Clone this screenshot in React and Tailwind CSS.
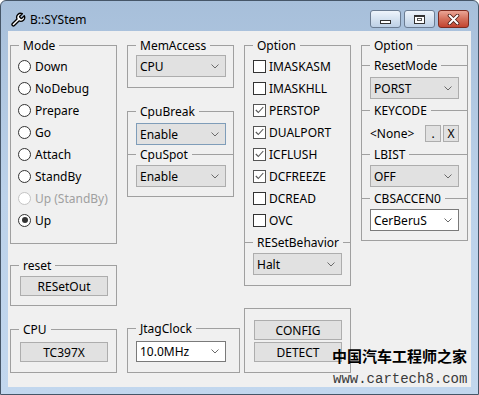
import React from 'react';

const Chevron = () => (
  <svg width="8" height="5" viewBox="0 0 8 5">
    <path d="M0.5 0.5 L4 4 L7.5 0.5" fill="none" stroke="#6a6a6a" strokeWidth="1" />
  </svg>
);

const Group = ({ label, className = '', children }) => (
  <fieldset className={`border border-[#a0a0a0] ${className}`}>
    {label && <legend className="ml-[8px] px-[4px] leading-[15px]">{label}</legend>}
    {children}
  </fieldset>
);

const Divider = ({ label, className = '' }) => (
  <div className={`flex items-center h-[15px] ${className}`}>
    <div className="w-[8px] h-px bg-[#a0a0a0]" />
    <span className="px-[4px] leading-[15px]">{label}</span>
    <div className="flex-1 h-px bg-[#a0a0a0]" />
  </div>
);

const Select = ({ value, white, className = '' }) => (
  <div
    className={`flex items-center justify-between h-[22px] border pl-[3px] pr-[6px] ${
      white ? 'bg-white border-[#7a7a7a]' : 'bg-[#e1e1e1] border-[#adadad]'
    } ${className}`}
  >
    <span className="leading-[15px]">{value}</span>
    <Chevron />
  </div>
);

const Button = ({ children, className = '' }) => (
  <div className={`flex items-center justify-center h-[20px] border border-[#adadad] bg-[#e1e1e1] leading-[15px] ${className}`}>
    {children}
  </div>
);

const Radio = ({ label, checked, disabled }) => (
  <div className="flex items-center h-[22px] pl-[7px] gap-[4px]">
    <div
      className={`w-[13px] h-[13px] rounded-full border bg-white flex items-center justify-center ${
        disabled ? 'border-[#c4c4c4]' : 'border-[#333333]'
      }`}
    >
      {checked && <div className="w-[6px] h-[6px] rounded-full bg-[#333333]" />}
    </div>
    <span className={`leading-[15px] ${disabled ? 'text-[#a0a0a0]' : ''}`}>{label}</span>
  </div>
);

const Check = ({ label, checked }) => (
  <div className="flex items-center h-[22px] pl-[8px] gap-[3px]">
    <div
      className={`w-[13px] h-[13px] border bg-white flex items-center justify-center ${
        checked ? 'border-[#555555]' : 'border-[#333333]'
      }`}
    >
      {checked && (
        <svg width="9" height="8" viewBox="0 0 9 8">
          <path d="M0.8 4 L3.3 6.5 L8.3 1" fill="none" stroke="#555555" strokeWidth="1.1" />
        </svg>
      )}
    </div>
    <span className="leading-[15px]">{label}</span>
  </div>
);

const Wrench = () => (
  <svg width="16" height="16" viewBox="0 0 24 24">
    <path
      d="M14.7 6.3a1 1 0 0 0 0 1.4l1.6 1.6a1 1 0 0 0 1.4 0l3.77-3.77a6 6 0 0 1-7.94 7.94l-6.91 6.91a2.12 2.12 0 0 1-3-3l6.91-6.91a6 6 0 0 1 7.94-7.94l-3.76 3.76z"
      fill="white"
      stroke="black"
      strokeWidth="2"
      strokeLinejoin="round"
    />
  </svg>
);

export default function App() {
  return (
    <div className="relative w-[479px] h-[395px] bg-white font-['Noto_Sans',sans-serif] text-[12px] text-black">
      <div className="w-full h-full flex flex-col rounded-t-[6px] border border-[#465668] bg-gradient-to-b from-[#a7bfda] via-[#bcd2ea] to-[#c2d7ee]">
        {/* title bar */}
        <div className="h-[30px] flex items-start pl-[9px] pr-[9px]">
          <div className="mt-[11px]">
            <Wrench />
          </div>
          <span className="ml-[4px] mt-[11px] leading-[15px]">B::SYStem</span>
          <div className="ml-auto mt-[9px] flex gap-[3px]">
            <div className="w-[31px] h-[18px] rounded-[3px] border border-[#6b7c92] bg-gradient-to-b from-[#eef4fb] via-[#d5e2f0] to-[#bdd0e6] flex items-end justify-center pb-[3px]">
              <div className="w-[11px] h-[4px] bg-white border border-[#333333]" />
            </div>
            <div className="w-[31px] h-[18px] rounded-[3px] border border-[#6b7c92] bg-gradient-to-b from-[#eef4fb] via-[#d5e2f0] to-[#bdd0e6] flex items-center justify-center">
              <div className="w-[11px] h-[9px] bg-white border border-[#333333] border-t-2 flex items-center justify-center">
                <div className="w-[5px] h-[3px] border border-[#555555]" />
              </div>
            </div>
            <div className="w-[31px] h-[18px] rounded-[3px] border border-[#7c2b20] bg-gradient-to-b from-[#eaa596] via-[#d4705c] to-[#c2432f] flex items-center justify-center">
              <svg width="13" height="11" viewBox="0 0 13 11">
                <path d="M2.5 1.5 L10.5 9.5 M10.5 1.5 L2.5 9.5" stroke="#4a1a12" strokeWidth="3.6" strokeLinecap="round" />
                <path d="M2.5 1.5 L10.5 9.5 M10.5 1.5 L2.5 9.5" stroke="white" strokeWidth="2" strokeLinecap="round" />
              </svg>
            </div>
          </div>
        </div>

        {/* client area */}
        <div className="flex-1 mx-[7px] mb-[7px] bg-[#f0f0f0] flex pt-[7px] pb-[14px] pl-[2px] gap-[10px]">
          {/* column 1 */}
          <div className="w-[107px] flex flex-col">
            <Group label="Mode" className="pb-[12px]">
              <div className="mt-[2px]">
                <Radio label="Down" />
                <Radio label="NoDebug" />
                <Radio label="Prepare" />
                <Radio label="Go" />
                <Radio label="Attach" />
                <Radio label="StandBy" />
                <Radio label="Up (StandBy)" disabled />
                <Radio label="Up" checked />
              </div>
            </Group>
            <Group label="reset" className="mt-[14px] pb-[9px]">
              <Button className="mt-[3px] ml-[9px] w-[88px]">RESetOut</Button>
            </Group>
            <Group label="CPU" className="mt-auto pb-[10px]">
              <Button className="mt-[5px] ml-[9px] w-[88px]">TC397X</Button>
            </Group>
          </div>

          {/* column 2 */}
          <div className="w-[107px] flex flex-col">
            <Group label="MemAccess" className="pb-[10px]">
              <Select value="CPU" className="mt-[2px] ml-[8px] w-[90px]" />
            </Group>
            <Group label="CpuBreak" className="mt-[16px] pb-[9px]">
              <Select value="Enable" className="mt-[4px] ml-[8px] w-[90px] !border-[#7f9db9]" />
              <Divider label="CpuSpot" className="mt-[2px]" />
              <Select value="Enable" className="mt-[3px] ml-[8px] w-[90px]" />
            </Group>
            <Group label="JtagClock" className="mt-auto w-[113px] shrink-0 pb-[10px]">
              <Select value="10.0MHz" white className="mt-[5px] ml-[8px] w-[90px] !h-[21px]" />
            </Group>
          </div>

          {/* column 3 */}
          <div className="w-[107px] flex flex-col">
            <Group label="Option" className="pb-[10px]">
              <div className="mt-[2px]">
                <Check label="IMASKASM" />
                <Check label="IMASKHLL" />
                <Check label="PERSTOP" checked />
                <Check label="DUALPORT" checked />
                <Check label="ICFLUSH" checked />
                <Check label="DCFREEZE" checked />
                <Check label="DCREAD" />
                <Check label="OVC" />
              </div>
              <Divider label="RESetBehavior" className="mt-[4px]" />
              <Select value="Halt" className="mt-[3px] ml-[8px] w-[89px]" />
            </Group>
            <div className="mt-auto border border-[#a0a0a0] pt-[11px] pb-[10px] flex flex-col gap-[2px]">
              <Button className="ml-[9px] w-[88px]">CONFIG</Button>
              <Button className="ml-[9px] w-[88px]">DETECT</Button>
            </div>
          </div>

          {/* column 4 */}
          <div className="w-[107px] flex flex-col">
            <Group label="Option" className="pb-[9px]">
              <Divider label="ResetMode" className="mt-[5px]" />
              <Select value="PORST" className="mt-[4px] ml-[8px] w-[89px]" />
              <Divider label="KEYCODE" className="mt-[4px]" />
              <div className="mt-[7px] h-[17px] flex items-center pl-[8px]">
                <span className="leading-[15px]">&lt;None&gt;</span>
                <div className="ml-auto mr-[8px] flex gap-[2px]">
                  <div className="w-[16px] h-[17px] border border-[#adadad] bg-[#e1e1e1] flex items-center justify-center leading-[15px]">.</div>
                  <div className="w-[16px] h-[17px] border border-[#adadad] bg-[#e1e1e1] flex items-center justify-center leading-[15px]">X</div>
                </div>
              </div>
              <Divider label="LBIST" className="mt-[5px]" />
              <Select value="OFF" className="mt-[3px] ml-[8px] w-[89px]" />
              <Divider label="CBSACCEN0" className="mt-[4px]" />
              <Select value="CerBeruS" white className="mt-[3px] ml-[8px] w-[89px]" />
            </Group>
          </div>
        </div>
      </div>

      {/* watermark */}
      <div className="absolute left-[332px] top-[347px] text-[15px] leading-[17px] font-bold text-black font-['Noto_Sans_CJK_SC',sans-serif] whitespace-nowrap">
        中国汽车工程师之家
      </div>
      <div className="absolute left-[333px] top-[372px] text-[14px] leading-[14px] text-[#3a3a3a] font-['Liberation_Mono',monospace] whitespace-nowrap">
        www.cartech8.com
      </div>
    </div>
  );
}
